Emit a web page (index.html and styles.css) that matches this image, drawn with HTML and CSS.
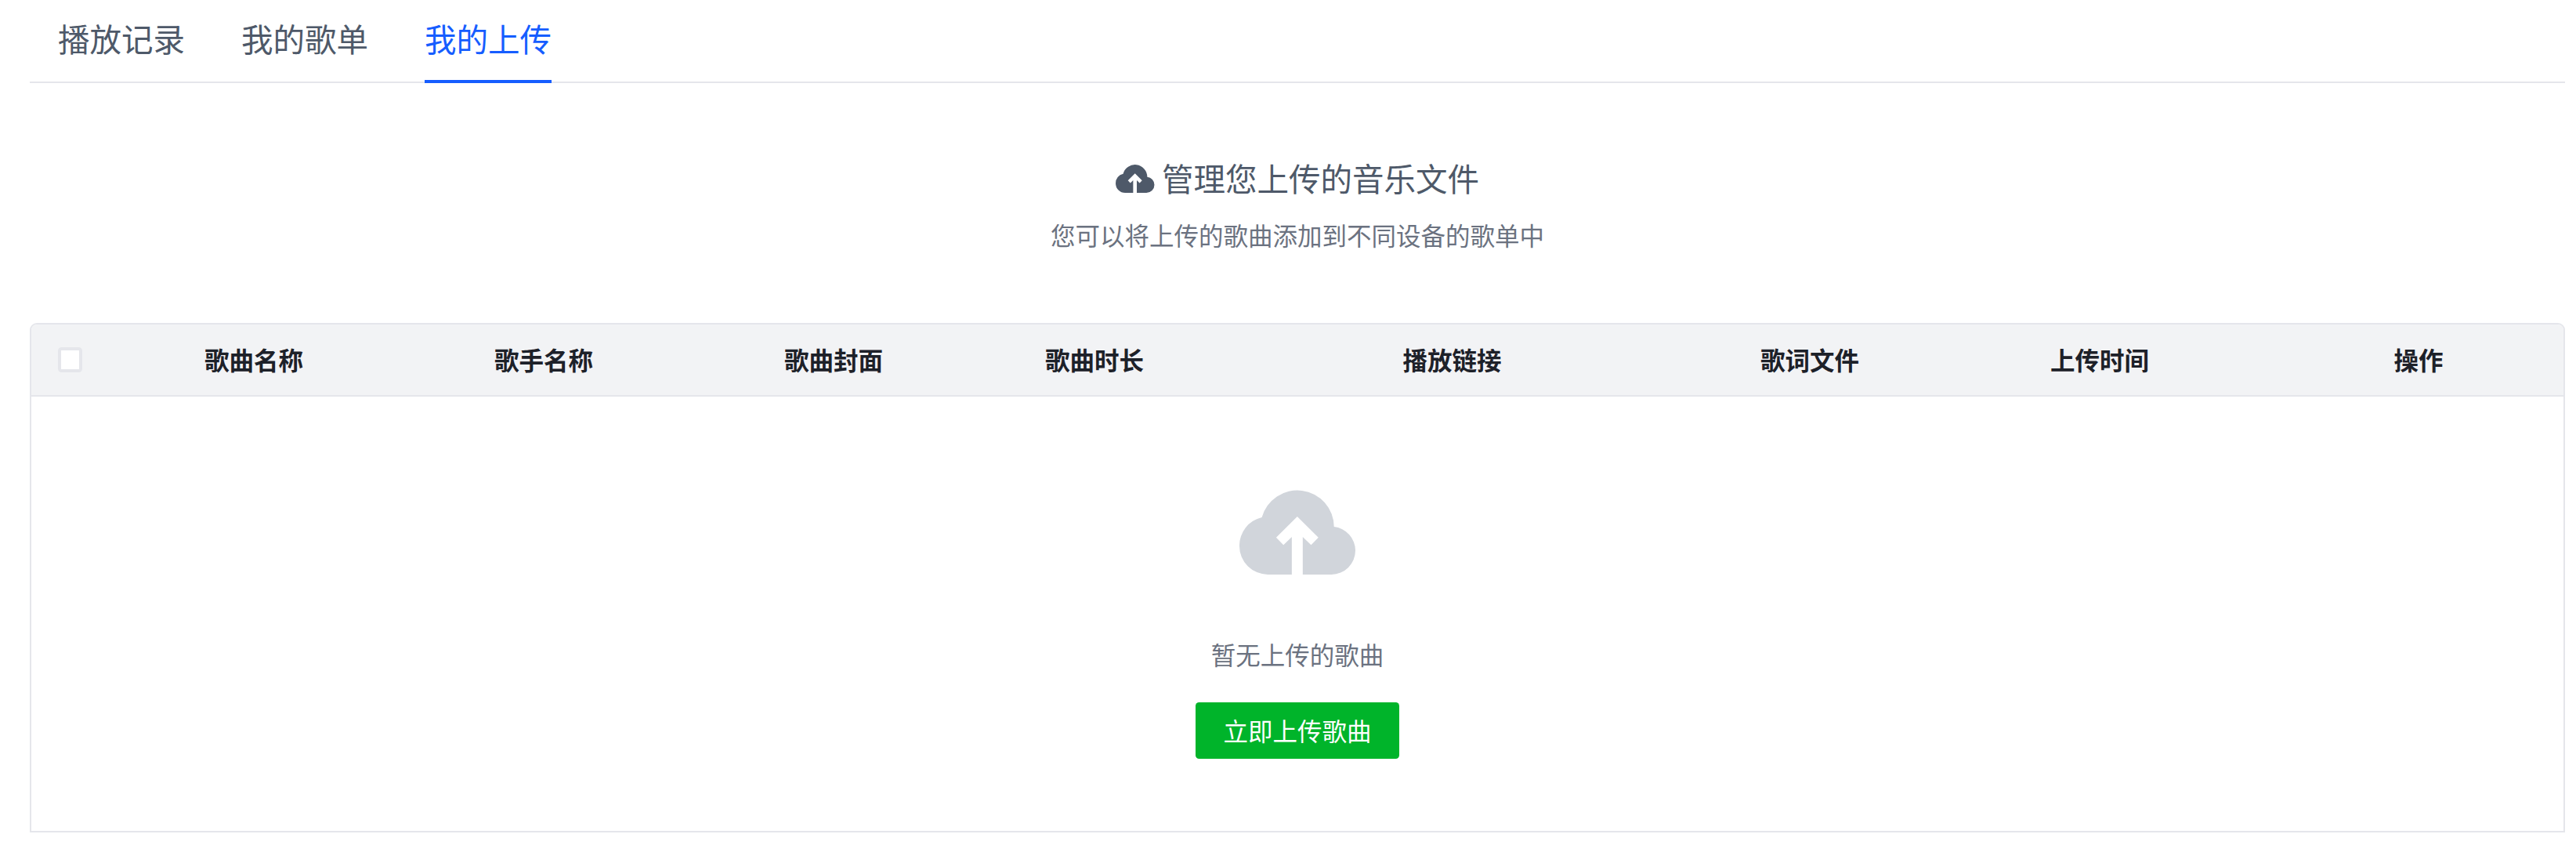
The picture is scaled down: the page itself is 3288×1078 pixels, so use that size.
FILE: index.html
```
<!DOCTYPE html>
<html lang="zh-CN">
<head>
  <meta charset="UTF-8">
  <meta name="viewport" content="width=device-width, initial-scale=1.0">
  <title>我的上传</title>
  <link rel="stylesheet" href="styles.css">
</head>
<body>

<div class="container">
  <nav class="tabs">
    <a class="tab">播放记录</a>
    <a class="tab">我的歌单</a>
    <a class="tab active">我的上传</a>
  </nav>

  <div class="intro">
    <h2>
      <svg class="title-icon" viewBox="0 0 445 324">
        <path d="M201 324H109A109 109 0 0 1 0 215A111 111 0 0 1 86 105A141 141 0 0 1 363 141A92 92 0 0 1 445 232A92 92 0 0 1 353 324H243V180L275 211L303 182L222 102L141 182L169 211L201 180Z"/>
      </svg>
      <span>管理您上传的音乐文件</span>
    </h2>
    <p>您可以将上传的歌曲添加到不同设备的歌单中</p>
  </div>

  <div class="table-box">
    <table class="song-table">
      <colgroup>
        <col class="col-check">
        <col class="col-md">
        <col class="col-md">
        <col class="col-md">
        <col class="col-sm">
        <col class="col-link">
        <col class="col-sm">
        <col class="col-time">
        <col class="col-md">
      </colgroup>
      <thead>
      <tr>
        <th class="check-cell"><span class="checkbox"></span></th>
        <th>歌曲名称</th>
        <th>歌手名称</th>
        <th>歌曲封面</th>
        <th>歌曲时长</th>
        <th>播放链接</th>
        <th>歌词文件</th>
        <th>上传时间</th>
        <th>操作</th>
      </tr>
      </thead>
    </table>
    <!-- Shown when there are no songs -->
    <div class="empty">
      <svg class="empty-icon" viewBox="0 0 445 324">
        <path d="M201 324H109A109 109 0 0 1 0 215A111 111 0 0 1 86 105A141 141 0 0 1 363 141A92 92 0 0 1 445 232A92 92 0 0 1 353 324H243V180L275 211L303 182L222 102L141 182L169 211L201 180Z"/>
      </svg>
      <p>暂无上传的歌曲</p>
      <button class="upload-btn">立即上传歌曲</button>
    </div>
  </div>
</div>

</body>
</html>
```

FILE: styles.css
```
* {
  box-sizing: border-box;
}

body {
  font-family: 'Noto Sans CJK SC', sans-serif;
  font-size: 31.5px;
  color: #1d2129;
  background-color: #fff;
  margin: 0;
}

.container {
  padding: 0 14px 0 38px;
}

.tabs {
  display: flex;
  gap: 72px;
  height: 106px;
  padding-left: 36px;
  border-bottom: 2px solid #e5e6eb;
}

.tab {
  height: 106px;
  line-height: 98px;
  font-size: 40.5px;
  color: #4e5969;
  cursor: pointer;
}

.tab.active {
  color: #165dff;
  border-bottom: 4px solid #165dff;
}

.intro {
  height: 306px;
  padding-top: 93px;
  text-align: center;
}

.intro h2 {
  display: flex;
  justify-content: center;
  align-items: center;
  gap: 9.5px;
  margin: 0;
  font-size: 40.5px;
  font-weight: 400;
  line-height: 56px;
  color: #4e5969;
}

.title-icon {
  width: 49.5px;
  height: 36px;
  margin-top: 2px;
  fill: #4e5969;
}

.intro p {
  margin: 21px 0 0;
  line-height: 46px;
  color: #6b7280;
}

.table-box {
  height: 650px;
  border: 2px solid #e5e6eb;
  border-radius: 9px 9px 0 0;
  overflow: hidden;
}

.song-table {
  width: 100%;
  table-layout: fixed;
  border-collapse: separate;
  border-spacing: 0;
}

.col-check {
  width: 99px;
}

.col-sm {
  width: 296px;
}

.col-md {
  width: 370px;
}

.col-link {
  width: 617px;
}

.col-time {
  width: 444px;
}

th {
  height: 92px;
  padding: 0 0 2px;
  font-weight: 700;
  text-align: center;
  background-color: #f2f3f5;
  border-bottom: 2px solid #e5e6eb;
}

.check-cell {
  padding: 0;
}

.checkbox {
  display: block;
  width: 31px;
  height: 32px;
  margin: 0 auto 0 34px;
  background-color: #fff;
  border: 4px solid #e5e6eb;
  border-radius: 4.5px;
}

.empty {
  display: flex;
  flex-direction: column;
  align-items: center;
  padding-top: 119px;
}

.empty-icon {
  width: 148px;
  height: 108px;
  fill: #d1d5db;
}

.empty p {
  margin: 78px 0 39px;
  line-height: 46px;
  color: #6b7280;
}

.upload-btn {
  width: 260px;
  height: 72px;
  padding: 0 0 2px;
  border: none;
  border-radius: 4.5px;
  background-color: #00b42a;
  color: #fff;
  font-family: inherit;
  font-size: 31.5px;
  cursor: pointer;
}
```
